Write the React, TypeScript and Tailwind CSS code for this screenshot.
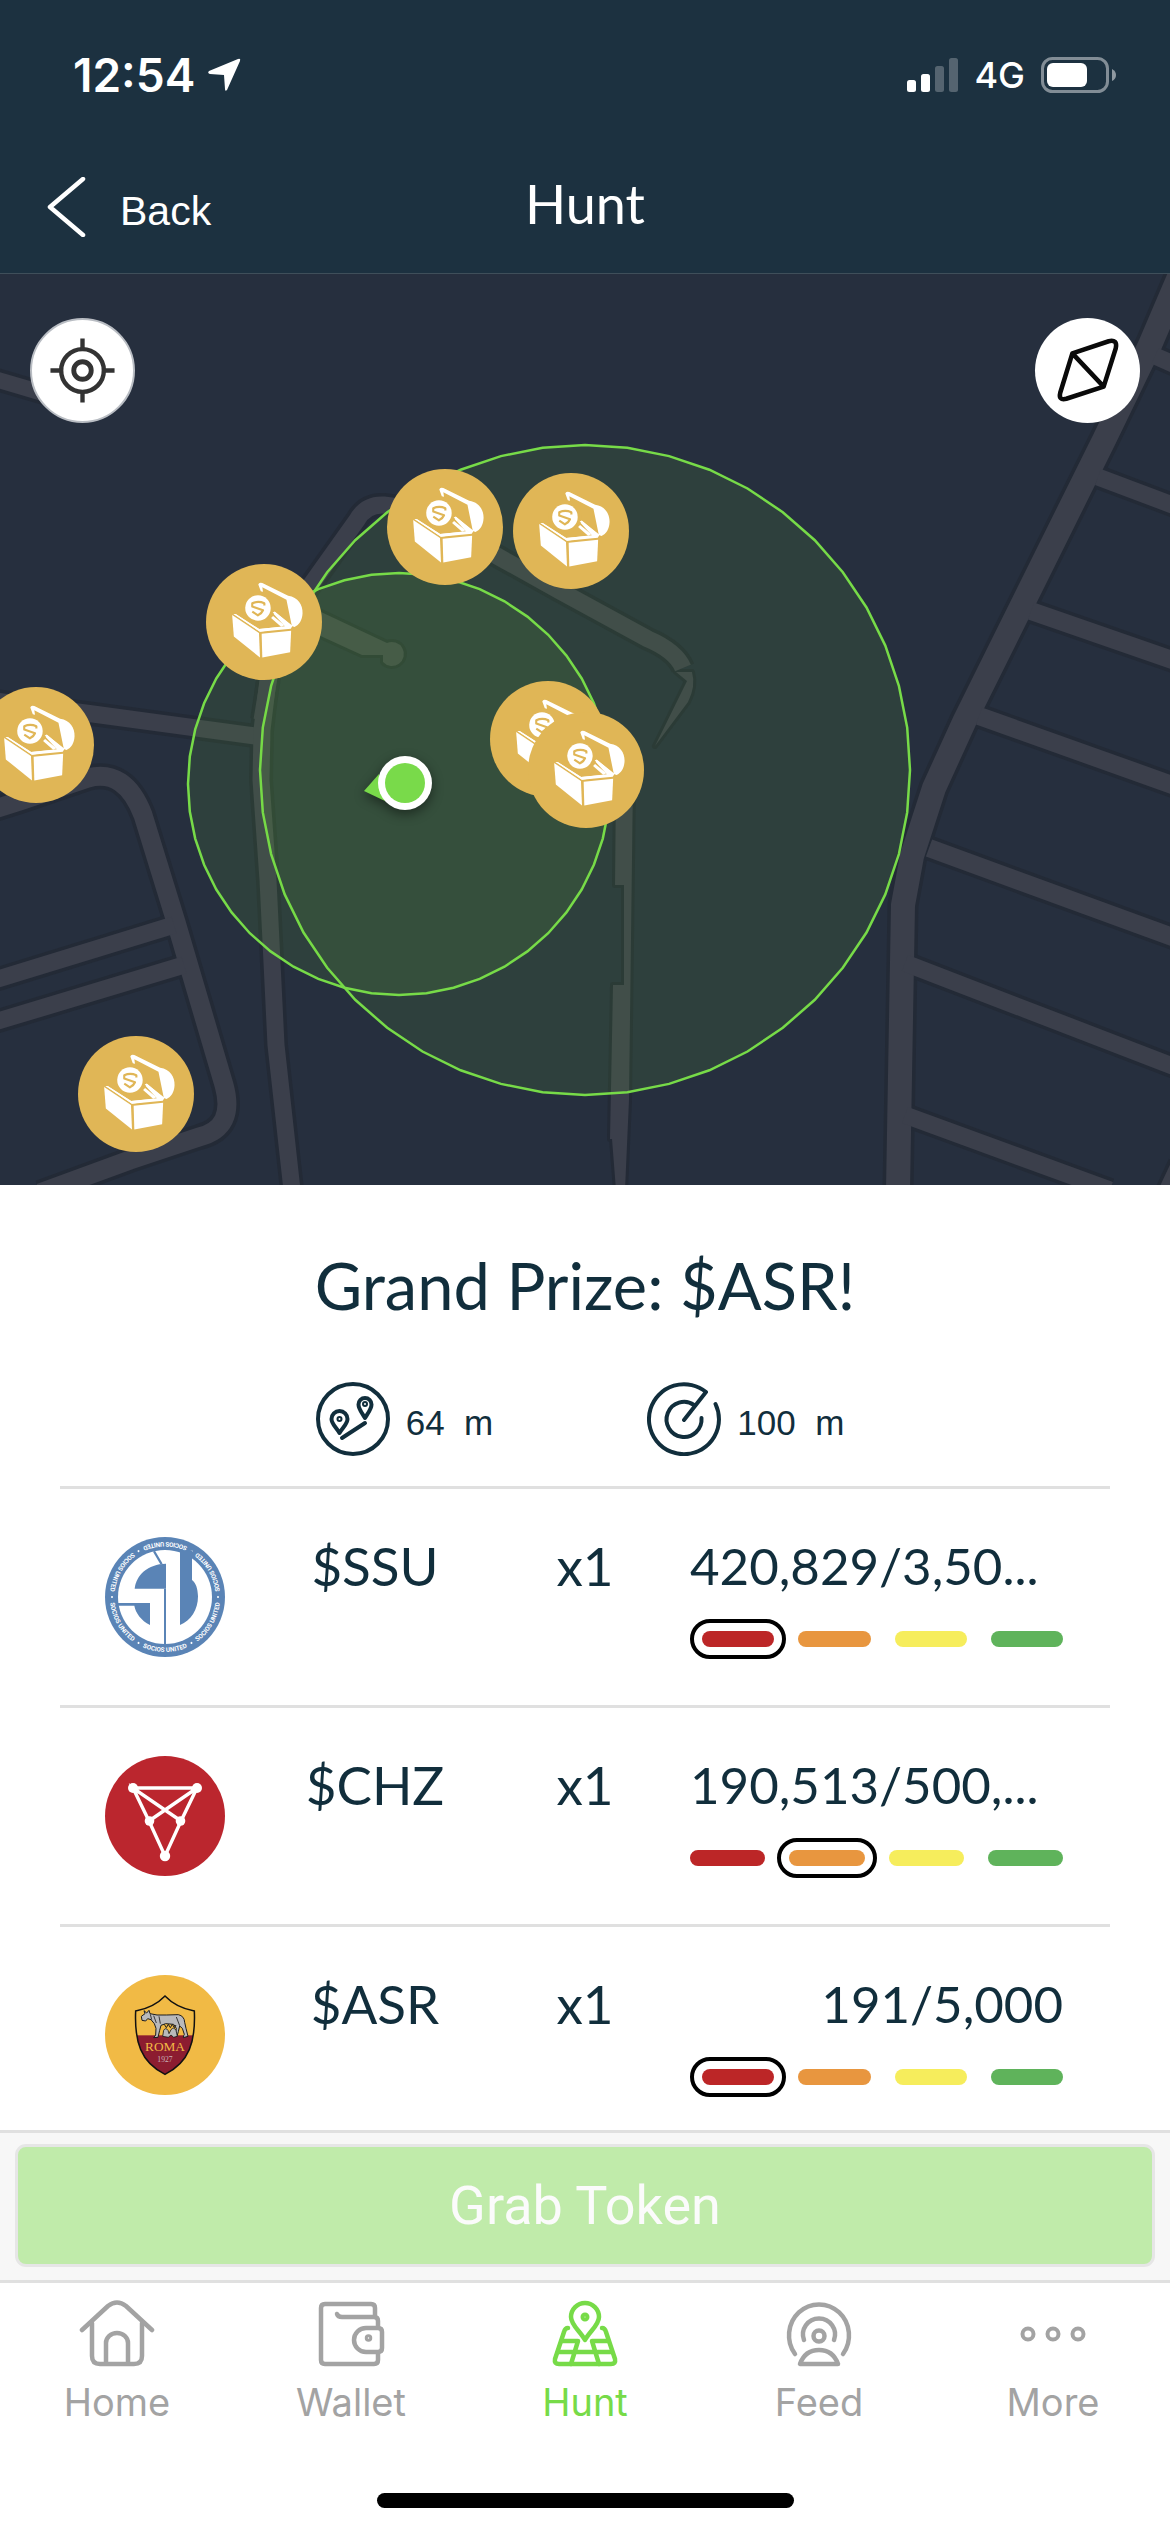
import type { ReactNode } from "react";

const MAP = { left: 0, top: 274, width: 1170, height: 911 };

const pins = [
  { id: 1, x: 445, y: 527 },
  { id: 2, x: 571, y: 531 },
  { id: 3, x: 264, y: 622 },
  { id: 4, x: 36, y: 745 },
  { id: 5, x: 548, y: 739 },
  { id: 6, x: 586, y: 770 },
  { id: 7, x: 136, y: 1094 },
];

const roads: { d: string; w: number }[] = [
  { d: "M1182 270 L1150 345 L1104 440 L965 720 L934 788 L912 856 L903 905 L898 1190", w: 24 },
  { d: "M1155 356 L1180 367", w: 17 },
  { d: "M1098 477 L1175 506", w: 17 },
  { d: "M1031 611 L1175 661", w: 18 },
  { d: "M979 716 L1175 786", w: 18 },
  { d: "M929 848 L1175 938", w: 18 },
  { d: "M905 963 L1175 1067", w: 17 },
  { d: "M905 1115 L1110 1190", w: 17 },
  { d: "M1168 1195 L1182 1165", w: 22 },
  { d: "M-5 379 L80 404", w: 16 },
  { d: "M-5 701 L93 714 L262 737", w: 17 },
  {
    d: "M262 720 L271 665 L300 600 L357 520 Q366 504 384 505 Q420 508 450 527 L497 556 L560 591 L648 639 Q676 651 683 668",
    w: 17,
  },
  { d: "M268 680 L262 730 L261 780 L268 880 L276 1045 L292 1190", w: 17 },
  { d: "M-5 809 L20 801 L88 778 Q125 768 143 815 L176 922 L224 1085 Q236 1128 199 1137 L130 1160 L40 1193", w: 19 },
  { d: "M174 925 L-5 980", w: 17 },
  { d: "M184 965 L-5 1022", w: 17 },
];

const roadShapes = [
  "M676 672 L687 681 L655 746 L688 702 Q696 686 692 672 Z",
  "M616 780 L615 885 L624 885 L624 985 L613 985 L610 1139 L612 1139 L616 1190 L625 1190 L629 1100 L633 780 Z",
  "M285 595 L387 643 A12 12 0 1 1 383 662 L383 655 L362 655 L290 622 Z",
];

function ring(cx: number, cy: number, r: number) {
  return Array.from({ length: 48 }, (_, i) => {
    const a = (i * Math.PI) / 24;
    return `${(cx + r * Math.sin(a)).toFixed(1)},${(cy - r * Math.cos(a)).toFixed(1)}`;
  }).join(" ");
}

function MapCanvas() {
  return (
    <svg
      viewBox={`${MAP.left} ${MAP.top} ${MAP.width} ${MAP.height}`}
      className="block h-auto w-full"
      fill="none"
      aria-label="Map"
    >
      <rect x="0" y="274" width="1170" height="911" fill="#262f3e" />
      <g stroke="#232a36" strokeLinejoin="round">
        {roads.map((r) => (
          <path key={r.d} d={r.d} strokeWidth={r.w + 7} />
        ))}
        {roadShapes.map((d) => (
          <path key={d} d={d} strokeWidth="6" />
        ))}
      </g>
      <g stroke="#3b3f4b" strokeLinejoin="round">
        {roads.map((r) => (
          <path key={r.d} d={r.d} strokeWidth={r.w} />
        ))}
      </g>
      {roadShapes.map((d) => (
        <path key={d} d={d} fill="#3b3f4b" />
      ))}
      <g fill="#76d83f" fillOpacity="0.1" stroke="#77db48" strokeWidth="2.5">
        <polygon points={ring(585, 770, 325)} />
        <polygon points={ring(399, 784, 211)} />
      </g>
    </svg>
  );
}

function Chest() {
  return (
    <svg viewBox="22 27 346 346" className="block h-full w-full" aria-hidden="true">
      <circle cx="195" cy="200" r="173" fill="#e0b656" />
      <g fill="#fff">
        <path d="M178 88 Q180 81 190 84 L267 122 C297 126 311 150 310 174 C309 194 300 209 286 215 L278 212 L262 134 L190 96 L192 110 L186 110 Z" />
        <path d="M100 179 L180 233 L183 306 L105 243 Z" />
        <path d="M188 235 L276 226 L273 290 L190 306 Z" />
        <path d="M104 176 L110 176 L180 221 L257 213 L224 176 L228 170 L280 211 L275 220 L183 229 Z" />
        <circle cx="177" cy="158" r="50" fill="#e0b656" />
        <path d="M104 176 L112 177 L181 221 L250 214 L256 218 L183 229 Z" />
        <path d="M221 172 L227 169 L278 212 L270 218 Z" />
        <path d="M216 188 L222 182 L256 210 L246 214 Z" />
        <circle cx="177" cy="158" r="38" />
      </g>
      <path
        d="M196 151 V144 Q178 136 160 144 V154 L192 165 Q188 175 177 180 L160 169"
        fill="none"
        stroke="#e0b656"
        strokeWidth="6.500"
        strokeLinejoin="round"
      />
    </svg>
  );
}

function UserDot() {
  return (
    <svg viewBox="0 0 100 100" className="block h-full w-full overflow-visible drop-shadow-[0_4px_6px_rgba(0,0,0,0.45)]" aria-hidden="true">
      <path d="M9 58 L24 41 L30 68 Z" fill="#79da4a" />
      <circle cx="50" cy="50" r="27" fill="#fff" />
      <circle cx="50" cy="50" r="20" fill="#79da4a" />
    </svg>
  );
}

function SsuLogo() {
  return (
    <svg viewBox="30 36 360 360" className="block size-[120px]" role="img" aria-label="Socios United">
      <defs>
        <path id="ssu-ring" d="M45 216 A165 165 0 0 0 375 216" />
      </defs>
      <circle cx="210" cy="216" r="180" fill="#5a84b6" />
      <circle cx="210" cy="216" r="141" fill="#fff" />
      {[0, 60, 120, 180, 240, 300].map((a) => (
        <g key={a} transform={`rotate(${a} 210 216)`} fill="#fff">
          <text fontSize="19" fontFamily="Roboto, sans-serif" fontWeight="700" textAnchor="middle">
            <textPath href="#ssu-ring" startOffset="50%">
              SOCIOS UNITED
            </textPath>
          </text>
          <circle cx="210" cy="375" r="3" transform="rotate(30 210 216)" />
        </g>
      ))}
      <g fill="#5a84b6">
        <path d="M119 191 C123 150 158 117 213 116 V191 Z" />
        <path d="M174 80 L180 77 L203 116 L196 118 Z" />
        <path d="M207 191 H213 V357 H207 Z" />
        <path d="M68 234 H165 V300 C138 286 122 264 118 242 H68 Z" />
        <path d="M255 76 H291 V165 C303 174 308 190 309 214 C309 255 288 286 255 300 Z" />
      </g>
    </svg>
  );
}

function ChzLogo() {
  return (
    <svg viewBox="0 0 120 120" className="block size-[120px]" role="img" aria-label="Chiliz">
      <circle cx="60" cy="60" r="60" fill="#bb262e" />
      <path
        d="M28 32 H92 L76 65 L60 100 L44 65 L28 32 L76 65 M92 32 L44 65"
        stroke="#fff"
        strokeWidth="3.4"
        fill="none"
      />
      <g fill="#fff">
        <circle cx="28" cy="32" r="5" />
        <circle cx="92" cy="32" r="5" />
        <circle cx="44.500" cy="65" r="4.800" />
        <circle cx="75.500" cy="65" r="4.800" />
        <circle cx="60" cy="100" r="5.200" />
      </g>
    </svg>
  );
}

function RomaLogo() {
  const shield =
    "M210 93 C190 114 160 131 122 138 C118 230 137 292 210 328 C283 292 302 230 298 138 C260 131 230 114 210 93 Z";
  return (
    <svg viewBox="30 30 360 360" className="block size-[120px]" role="img" aria-label="AS Roma">
      <defs>
        <clipPath id="roma-shield">
          <path d={shield} />
        </clipPath>
      </defs>
      <circle cx="210" cy="210" r="180" fill="#f1ba45" />
      <rect x="110" y="211" width="200" height="120" fill="#8c1c30" clipPath="url(#roma-shield)" />
      <path d={shield} fill="none" stroke="#111" strokeWidth="4.500" />
      <path
        d="M139 154 L150 146 L147 137 L155 144 L162 136 L165 146 L186 150 L215 150 L250 149 Q268 153 269 172 L273 190 L279 214 L265 218 L266 212 L268 208 L262 190 L254 183 L250 200 L246 214 L240 213 L244 190 L236 178 L212 176 L198 181 L194 196 L189 217 L176 218 L182 210 L183 190 L178 176 L168 164 L158 161 L152 168 L141 166 Z"
        fill="#b9b9bb"
        stroke="#1c1c1c"
        strokeWidth="3"
        strokeLinejoin="round"
      />
      <path d="M166 148 L170 164 M176 152 L184 174 M192 154 L196 176 M244 156 L254 182" stroke="#1c1c1c" strokeWidth="2.500" />
      <path
        d="M203 214 L206 196 Q212 186 219 196 L222 206 L228 194 Q236 184 243 196 L247 214 L236 217 L228 210 L220 217 Z"
        fill="#b9b9bb"
        stroke="#1c1c1c"
        strokeWidth="2.500"
      />
      <path d="M208 178 L214 188 L220 178 L226 188 L232 178 L238 188 L243 180" stroke="#1c1c1c" strokeWidth="3" fill="none" />
      <text x="210" y="259" textAnchor="middle" fontFamily="Liberation Serif, serif" fontSize="40" fill="#f1ba45">
        ROMA
      </text>
      <text x="210" y="291" textAnchor="middle" fontFamily="Liberation Serif, serif" fontSize="23" fill="#c9b3b8">
        1927
      </text>
    </svg>
  );
}

const levels = ["bg-[#bc2627]", "bg-[#e8963f]", "bg-[#f6ed5c]", "bg-[#5fb35b]"];
const levelNames = ["Low", "Fair", "Good", "High"];

function LevelBar({ active }: { active: number }) {
  return (
    <div
      className={`mt-9 flex gap-6 ${active === 0 ? "pl-3" : ""}`}
      role="img"
      aria-label={`Availability: ${levelNames[active]}`}
    >
      {levels.map((color, i) => (
        <span key={color} className={`relative h-4 flex-1 rounded-full ${color}`}>
          {i === active && <span className="absolute -inset-3 rounded-full border-4 border-black" />}
        </span>
      ))}
    </div>
  );
}

const tokens: { name: string; qty: string; value: string; align: string; level: number; logo: ReactNode }[] = [
  { name: "$SSU", qty: "x1", value: "420,829/3,50...", align: "text-left", level: 0, logo: <SsuLogo /> },
  { name: "$CHZ", qty: "x1", value: "190,513/500,...", align: "text-left", level: 1, logo: <ChzLogo /> },
  { name: "$ASR", qty: "x1", value: "191/5,000", align: "text-right", level: 0, logo: <RomaLogo /> },
];

function TabIcon({ children }: { children: ReactNode }) {
  return (
    <svg
      viewBox="0 0 80 68"
      className="h-[68px] w-[80px]"
      fill="none"
      stroke="currentColor"
      strokeWidth="4.5"
      strokeLinecap="round"
      strokeLinejoin="round"
      aria-hidden="true"
    >
      {children}
    </svg>
  );
}

const tabs: { label: string; active?: boolean; icon: ReactNode }[] = [
  {
    label: "Home",
    icon: (
      <>
        <path d="M5 30 L31 6 Q40 -1 49 6 L75 30" />
        <path d="M15 23 V56 Q15 64 23 64 H57 Q65 64 65 56 V23" />
        <path d="M29 63 V43 A11 10 0 0 1 51 43 V63" />
      </>
    ),
  },
  {
    label: "Wallet",
    icon: (
      <>
        <path d="M64 16 V8 Q64 4 60 4 H14 Q10 4 10 8 V60 Q10 64 14 64 H63 Q67 64 67 60 V53" />
        <path d="M67 27 V21 Q67 17 63 17 H31 Q27 17 26 14" />
        <path d="M71 32 Q71 28 67 28 H55 A12 12 0 0 0 55 52 H67 Q71 52 71 48 Z" />
        <circle cx="57.500" cy="38" r="1.500" />
      </>
    ),
  },
  {
    label: "Hunt",
    active: true,
    icon: (
      <>
        <path d="M40 40 C35 31 26 25 26 17 A14 14 0 0 1 54 17 C54 25 45 31 40 40 Z" />
        <circle cx="40" cy="17" r="2.500" strokeWidth="4" />
        <path d="M23 28 Q20 28 19 32 L10 59 Q9 64 14 64 H66 Q71 64 70 59 L61 32 Q60 28 57 28" />
        <path d="M17 41 H33 L26 64 M63 41 H47 L54 64 M13 52 H67" />
      </>
    ),
  },
  {
    label: "Feed",
    icon: (
      <>
        <path d="M16 54 A30 31 0 1 1 64 54" />
        <path d="M25 40 A16 16 0 1 1 55 40" />
        <circle cx="40" cy="36" r="5.500" />
        <path d="M21 64 H59 Q54 50 40 50 Q26 50 21 64 Z" />
      </>
    ),
  },
  {
    label: "More",
    icon: (
      <g strokeWidth="4">
        <circle cx="15" cy="34" r="5.500" />
        <circle cx="40" cy="34" r="5.500" />
        <circle cx="65" cy="34" r="5.500" />
      </g>
    ),
  },
];

export default function App() {
  return (
    <div className="flex h-screen flex-col overflow-hidden bg-white font-['Lato',sans-serif] text-[#112e3c]">
      <header className="shrink-0 border-b border-[#3f4f5a] bg-[#1c3140] text-white">
        <div className="flex h-[150px] items-center justify-between pr-[54px] pl-[73px] font-['Inter',sans-serif]">
          <div className="flex items-center gap-3">
            <time className="text-[46px] leading-none font-semibold">12:54</time>
            <svg viewBox="0 0 34 34" className="size-[34px]" fill="#fff" aria-hidden="true">
              <path d="M31 1 Q34 0 33 3 L20 32 Q18 34 18 31 L17 17 L3 16 Q0 15 2 13 Z" />
            </svg>
          </div>
          <div className="flex items-center gap-4">
            <svg viewBox="0 0 51 34" className="h-[34px] w-[51px]" fill="#fff" aria-label="Signal">
              <rect x="0" y="22" width="9" height="12" rx="2.500" />
              <rect x="14" y="16" width="9" height="18" rx="2.500" />
              <rect x="28" y="8" width="9" height="26" rx="2.500" opacity="0.25" />
              <rect x="42" y="0" width="9" height="34" rx="2.500" opacity="0.25" />
            </svg>
            <span className="text-[36px] leading-none font-medium">4G</span>
            <svg viewBox="0 0 75 36" className="h-[36px] w-[75px]" aria-label="Battery">
              <rect x="1.500" y="1.500" width="65" height="33" rx="10" fill="none" stroke="#fff" strokeOpacity="0.45" strokeWidth="3" />
              <rect x="6" y="6" width="40" height="24" rx="6" fill="#fff" />
              <path d="M71 12 Q75 14 75 18 Q75 22 71 24 Z" fill="#fff" fillOpacity="0.5" />
            </svg>
          </div>
        </div>
        <nav className="grid h-[123px] grid-cols-3 items-start px-[46px] pt-[27px]">
          <button type="button" className="flex items-start gap-[34px] font-['Liberation_Sans',sans-serif] text-[41px]">
            <svg viewBox="0 0 40 60" className="h-[60px] w-[40px]" fill="none" stroke="#fff" strokeWidth="4.500" strokeLinecap="round" strokeLinejoin="round" aria-hidden="true">
              <path d="M37 2 L4 30 L37 58" />
            </svg>
            <span className="leading-[68px]">Back</span>
          </button>
          <h1 className="text-center text-[54px] leading-[54px]">Hunt</h1>
        </nav>
      </header>

      <section className="relative shrink-0 overflow-hidden">
        <MapCanvas />
        {pins.map((p) => (
          <button
            key={p.id}
            type="button"
            aria-label={`Treasure chest ${p.id}`}
            className="absolute size-[116px] -translate-x-1/2 -translate-y-1/2 rounded-full"
            style={{ left: `${(p.x / MAP.width) * 100}%`, top: `${((p.y - MAP.top) / MAP.height) * 100}%` }}
          >
            <Chest />
          </button>
        ))}
        <span
          className="absolute size-[100px] -translate-x-1/2 -translate-y-1/2"
          style={{ left: `${(405 / MAP.width) * 100}%`, top: `${((783 - MAP.top) / MAP.height) * 100}%` }}
        >
          <UserDot />
        </span>
        <div className="absolute inset-x-0 top-0 flex justify-between px-[30px] pt-11">
          <button type="button" aria-label="Center on my location" className="size-[105px] rounded-full border-2 border-[#b9bdc3] bg-white">
            <svg viewBox="-52 -52 104 104" className="block h-full w-full" fill="none" stroke="#333" strokeWidth="4.500" aria-hidden="true">
              <circle r="22" />
              <circle r="9" strokeWidth="5" />
              <path d="M0 -33 V-20 M0 33 V20 M-33 0 H-20 M33 0 H20" />
            </svg>
          </button>
          <button type="button" aria-label="Compass" className="size-[105px] rounded-full bg-white">
            <svg viewBox="-52 -52 104 104" className="block h-full w-full" fill="none" stroke="#0a0a0a" strokeWidth="4.500" strokeLinejoin="round" aria-hidden="true">
              <path d="M-15 -17 L21 -29 Q30 -31 28 -22 L16 16 L-21 28 Q-29 30 -27 22 Z M-15 -17 L16 16" />
            </svg>
          </button>
        </div>
      </section>

      <main className="min-h-0 flex-1 overflow-hidden px-[60px] pt-[62px]">
        <h2 className="text-center text-[65px] leading-[76px]">Grand Prize: $ASR!</h2>
        <div className="mt-[59px] mb-[22px] flex justify-center gap-[154px] pr-[10px] font-['Liberation_Sans',sans-serif] text-[35px]">
          <div className="flex gap-4">
            <svg viewBox="0 0 74 74" className="size-[74px]" fill="none" stroke="currentColor" strokeWidth="4" strokeLinecap="round" strokeLinejoin="round" aria-label="Distance">
              <circle cx="37" cy="37" r="35" />
              <path d="M23.500 51 C20 45 15.500 42 15.500 37 A8 8 0 0 1 31.500 37 C31.500 42 27 45 23.500 51 Z" />
              <circle cx="23.500" cy="37" r="1" />
              <path d="M49 36 C46 31 42.500 27 42.500 22.500 A6.500 6.500 0 0 1 55.500 22.500 C55.500 27 52 31 49 36 Z" />
              <circle cx="49" cy="22" r="1" />
              <path d="M26 56 L49 41" />
            </svg>
            <span className="leading-[82px] whitespace-pre">64{"  "}m</span>
          </div>
          <div className="flex gap-4">
            <svg viewBox="0 0 74 74" className="size-[74px]" fill="none" stroke="currentColor" strokeWidth="4" strokeLinecap="round" strokeLinejoin="round" aria-label="Radius">
              <path d="M68.500 22 A35 35 0 1 1 59 10 L37 38" />
              <path d="M47 23 A17.500 17.500 0 1 0 54.500 36" />
            </svg>
            <span className="leading-[82px] whitespace-pre">100{"  "}m</span>
          </div>
        </div>
        <ul>
          {tokens.map((t) => (
            <li key={t.name} className="grid h-[219px] grid-cols-5 border-t-3 border-[#e0e0e0] pt-12 text-[53px] leading-[58px]">
              <div className="flex justify-center">{t.logo}</div>
              <span className="text-center">{t.name}</span>
              <span className="text-center">{t.qty}</span>
              <div className="col-span-2 pr-[47px]">
                <p className={`text-[51px] whitespace-nowrap ${t.align}`}>{t.value}</p>
                <LevelBar active={t.level} />
              </div>
            </li>
          ))}
        </ul>
      </main>

      <footer className="shrink-0">
        <div className="border-y-3 border-[#e0e0e0] bg-[#f7f7f7] px-[15px] pt-[11px] pb-[13px]">
          <button
            type="button"
            disabled
            className="h-[123px] w-full rounded-[11px] border-3 border-[#e6e6e6] bg-[#c0ebaa] font-['Roboto',sans-serif] text-[54px] text-[#fbfbfb]"
          >
            Grab Token
          </button>
        </div>
        <nav className="grid grid-cols-5 bg-white pt-[17px]">
          {tabs.map((t) => (
            <a
              key={t.label}
              href={`#${t.label.toLowerCase()}`}
              aria-current={t.active ? "page" : undefined}
              className={`flex flex-col items-center gap-3 font-['Inter',sans-serif] text-[38px] leading-[44px] ${t.active ? "text-[#77db48]" : "text-[#a3a3a3]"}`}
            >
              <TabIcon>{t.icon}</TabIcon>
              {t.label}
            </a>
          ))}
        </nav>
        <div className="flex justify-center pt-[69px] pb-6">
          <span className="h-[15px] w-[417px] rounded-full bg-black" />
        </div>
      </footer>
    </div>
  );
}
